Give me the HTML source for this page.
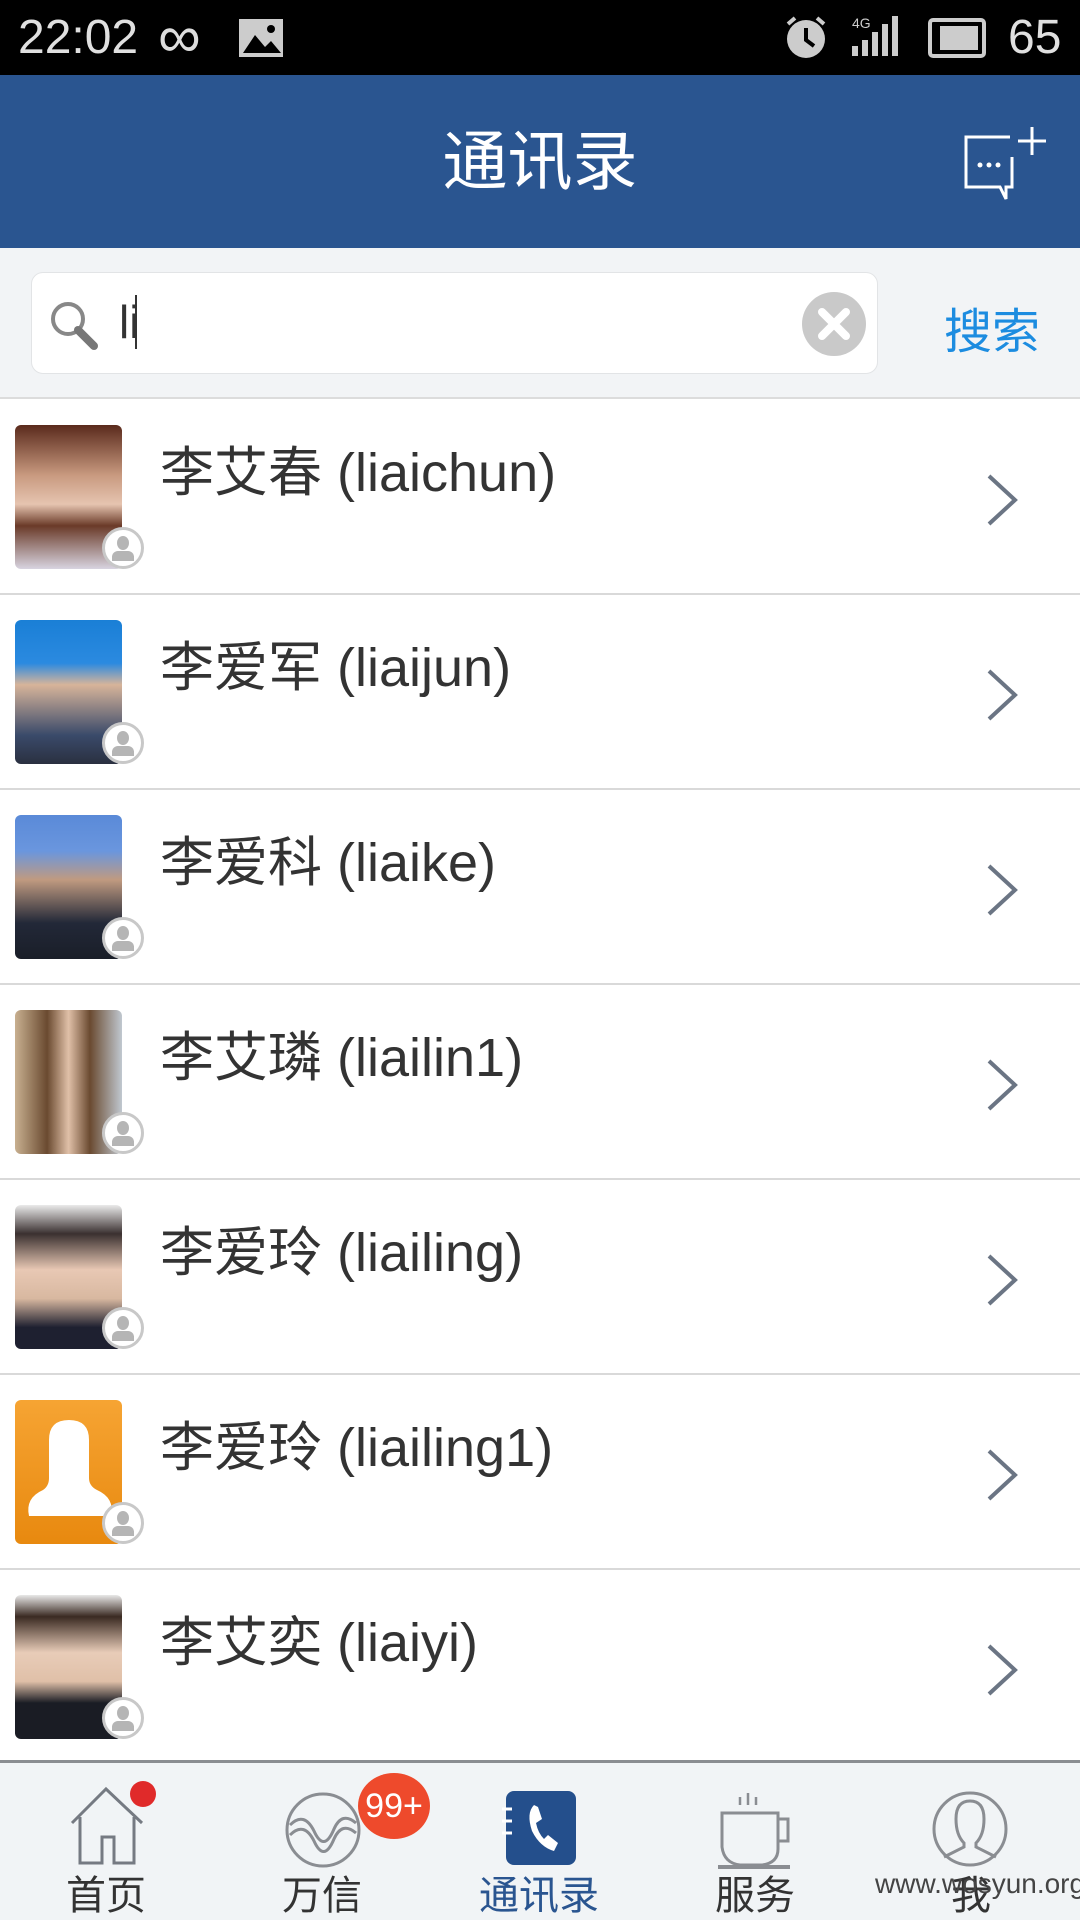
<!DOCTYPE html>
<html><head><meta charset="utf-8"><style>
*{margin:0;padding:0;box-sizing:border-box}
body{width:1080px;height:1920px;overflow:hidden;background:#fff;font-family:"Liberation Sans","Noto Sans CJK SC",sans-serif;position:relative}
.status{position:absolute;left:0;top:0;width:1080px;height:75px;background:#000;color:#ddd;font-size:48px}
.header{position:absolute;left:0;top:75px;width:1080px;height:173px;background:#2a5590;color:#fff;text-align:center;font-size:65px;line-height:173px}
.sarea{position:absolute;left:0;top:248px;width:1080px;height:151px;background:#f2f4f6;border-bottom:2px solid #dcdcdc}
.sbox{position:absolute;left:31px;top:24px;width:847px;height:102px;background:#fff;border:1px solid #e2e4e6;border-radius:12px}
.row{position:absolute;left:0;width:1080px;height:195px;border-bottom:2px solid #d9d9d9}
.av{position:absolute;left:15px;top:25px;width:107px;height:144px;border-radius:6px;overflow:hidden}
.badge{position:absolute;left:102px;top:127px;width:42px;height:42px;border-radius:50%;background:#fff;border:3px solid #c8c8c8;overflow:hidden}
.badge::before{content:"";position:absolute;left:12px;top:6px;width:12px;height:14px;border-radius:50%;background:#b5b5b5}
.badge::after{content:"";position:absolute;left:7px;top:21px;width:22px;height:10px;border-radius:6px 6px 0 0;background:#b5b5b5}
.name{position:absolute;left:160px;top:28px;font-size:54px;color:#333;white-space:nowrap}
.chev{position:absolute;left:985px;top:72px}
.tab{position:absolute;left:0;top:1760px;width:1080px;height:160px;background:#f1f4f6;border-top:3px solid #8a8d91}
.tl{position:absolute;top:100px;font-size:40px;color:#333;width:200px;text-align:center}
</style></head><body>
<div class="status">
<span style="position:absolute;left:18px;top:10px;font-size:48px;color:#e0e0e0">22:02</span>
<span style="position:absolute;left:158px;top:2px;font-size:60px">∞</span>
<svg style="position:absolute;left:237px;top:17px" width="48" height="42"><rect x="2" y="2" width="44" height="38" fill="#ccc"/><path d="M6 36 L18 18 L28 30 L34 24 L44 36Z" fill="#000"/><circle cx="34" cy="12" r="4" fill="#000"/></svg>
<svg style="position:absolute;left:783px;top:14px" width="46" height="46"><circle cx="23" cy="25" r="19" fill="#ccc"/><path d="M23 14 V26 L31 32" stroke="#000" stroke-width="4" fill="none"/><path d="M5 10 L12 4 M41 10 L34 4" stroke="#ccc" stroke-width="4"/></svg>
<svg style="position:absolute;left:850px;top:14px" width="56" height="44"><text x="2" y="14" font-size="14" fill="#ccc" font-family="Liberation Sans">4G</text><rect x="2" y="32" width="6" height="10" fill="#ccc"/><rect x="12" y="26" width="6" height="16" fill="#ccc"/><rect x="22" y="18" width="6" height="24" fill="#ccc"/><rect x="32" y="10" width="6" height="32" fill="#ccc"/><rect x="42" y="2" width="6" height="40" fill="#ccc"/></svg>
<svg style="position:absolute;left:926px;top:18px" width="62" height="40"><rect x="4" y="2" width="54" height="36" rx="3" fill="none" stroke="#ccc" stroke-width="4"/><rect x="14" y="8" width="38" height="24" fill="#ccc"/></svg>
<span style="position:absolute;left:1008px;top:10px;font-size:48px;color:#e0e0e0">65</span>
</div>
<div class="header">通讯录
<svg style="position:absolute;left:960px;top:50px" width="90" height="80"><path d="M50 12 H6 V62 H40 L46 74 V62 H52 V32" fill="none" stroke="#fff" stroke-width="3"/><path d="M72 2 V30 M58 16 H86" stroke="#fff" stroke-width="3"/><circle cx="20" cy="40" r="2.5" fill="#fff"/><circle cx="29" cy="40" r="2.5" fill="#fff"/><circle cx="38" cy="40" r="2.5" fill="#fff"/></svg>
</div>
<div class="sarea">
<div class="sbox">
<svg style="position:absolute;left:14px;top:24px" width="56" height="56"><circle cx="22" cy="22" r="15" fill="none" stroke="#888" stroke-width="4"/><path d="M32 33 L48 49" stroke="#777" stroke-width="8" stroke-linecap="round"/></svg>
<span style="position:absolute;left:87px;top:22px;font-size:46px;color:#333">li</span>
<div style="position:absolute;left:103px;top:22px;width:2px;height:54px;background:#333"></div>
<svg style="position:absolute;left:768px;top:17px" width="68" height="68"><circle cx="34" cy="34" r="32" fill="#c9c9c9"/><path d="M22 22 L46 46 M46 22 L22 46" stroke="#fff" stroke-width="8" stroke-linecap="round"/></svg>
</div>
<span style="position:absolute;left:944px;top:44px;font-size:48px;color:#1c8ce0">搜索</span>
</div>

<div class="row" style="top:400px"><div class="av" style="background:linear-gradient(#5a2a1c 0%,#c99a80 35%,#e6c4b0 55%,#6a3a28 70%,#d8d4e0 100%)"></div><div class="badge"></div><div class="name">李艾春 (liaichun)</div><svg class="chev" width="36" height="56"><path d="M4 4 L30 28 L4 52" fill="none" stroke="#6b7584" stroke-width="4"/></svg></div>
<div class="row" style="top:595px"><div class="av" style="background:linear-gradient(#1a7fd6 0%,#2b8ae0 30%,#d7b49a 45%,#3a4a6a 80%,#2a3040 100%)"></div><div class="badge"></div><div class="name">李爱军 (liaijun)</div><svg class="chev" width="36" height="56"><path d="M4 4 L30 28 L4 52" fill="none" stroke="#6b7584" stroke-width="4"/></svg></div>
<div class="row" style="top:790px"><div class="av" style="background:linear-gradient(#5a8ad8 0%,#6a96de 25%,#c09a80 45%,#222838 75%,#1a1e28 100%)"></div><div class="badge"></div><div class="name">李爱科 (liaike)</div><svg class="chev" width="36" height="56"><path d="M4 4 L30 28 L4 52" fill="none" stroke="#6b7584" stroke-width="4"/></svg></div>
<div class="row" style="top:985px"><div class="av" style="background:linear-gradient(90deg,#c8b090 0%,#6a4a30 30%,#e0c0a8 50%,#6a4a30 70%,#c0c8d0 100%)"></div><div class="badge"></div><div class="name">李艾璘 (liailin1)</div><svg class="chev" width="36" height="56"><path d="M4 4 L30 28 L4 52" fill="none" stroke="#6b7584" stroke-width="4"/></svg></div>
<div class="row" style="top:1180px"><div class="av" style="background:linear-gradient(#eaeaea 0%,#3a3030 20%,#e8c8b4 45%,#d8b8a0 65%,#1e2030 85%,#1e2030 100%)"></div><div class="badge"></div><div class="name">李爱玲 (liailing)</div><svg class="chev" width="36" height="56"><path d="M4 4 L30 28 L4 52" fill="none" stroke="#6b7584" stroke-width="4"/></svg></div>
<div class="row" style="top:1375px"><div class="av" style="background:linear-gradient(#f6a433,#e8890f)"><svg width="107" height="144"><path d="M34 40 Q34 20 54 20 Q74 20 74 40 V78 Q74 86 82 90 Q100 98 96 116 H14 Q10 98 28 90 Q34 86 34 78Z" fill="#fff"/></svg></div><div class="badge"></div><div class="name">李爱玲 (liailing1)</div><svg class="chev" width="36" height="56"><path d="M4 4 L30 28 L4 52" fill="none" stroke="#6b7584" stroke-width="4"/></svg></div>
<div class="row" style="top:1570px"><div class="av" style="background:linear-gradient(#e8e8e8 0%,#3a2a22 15%,#e8ccb8 40%,#e0c0a8 60%,#1a1c24 75%,#1a1c24 100%)"></div><div class="badge"></div><div class="name">李艾奕 (liaiyi)</div><svg class="chev" width="36" height="56"><path d="M4 4 L30 28 L4 52" fill="none" stroke="#6b7584" stroke-width="4"/></svg></div>

<div class="tab">
<svg style="position:absolute;left:68px;top:22px" width="80" height="80"><path d="M4 38 L38 4 L74 38 M12 32 V78 H34 V52 H46 V78 H66 V32" fill="none" stroke="#757a82" stroke-width="3"/></svg>
<div style="position:absolute;left:130px;top:18px;width:26px;height:26px;border-radius:50%;background:#e02a2a"></div>
<svg style="position:absolute;left:284px;top:28px" width="78" height="78"><circle cx="39" cy="39" r="36" fill="none" stroke="#8a8d92" stroke-width="3"/><path d="M6 34 Q20 20 30 40 Q40 62 50 38 Q58 20 72 32" fill="none" stroke="#8a8d92" stroke-width="3"/><path d="M6 44 Q20 30 30 50 Q40 72 50 48 Q58 30 72 42" fill="none" stroke="#8a8d92" stroke-width="3"/></svg>
<div style="position:absolute;left:358px;top:10px;width:72px;height:66px;border-radius:50%;background:#ee4a2c;color:#fff;font-size:34px;line-height:66px;text-align:center">99+</div>
<svg style="position:absolute;left:500px;top:26px" width="78" height="78"><rect x="6" y="2" width="70" height="74" rx="8" fill="#244f8c"/><path d="M2 20 H12 M2 32 H12 M2 44 H12" stroke="#fff" stroke-width="3"/><path d="M34 16 Q26 24 32 42 Q40 58 54 62 L58 54 L48 46 L44 50 Q38 44 36 34 L42 30 L38 18Z" fill="#fff"/></svg>
<svg style="position:absolute;left:716px;top:24px" width="80" height="82"><path d="M24 10 V18 M32 6 V18 M40 10 V18" stroke="#8a8d92" stroke-width="2.5"/><path d="M6 26 H62 V62 Q62 76 46 78 H24 Q8 76 6 60Z M62 32 H72 V54 H62" fill="none" stroke="#8a8d92" stroke-width="3"/><path d="M2 80 H74" stroke="#8a8d92" stroke-width="4"/></svg>
<svg style="position:absolute;left:930px;top:26px" width="80" height="80"><circle cx="40" cy="40" r="36" fill="none" stroke="#8a8d92" stroke-width="3"/><path d="M40 12 Q26 12 26 30 Q26 46 34 54 L34 58 L14 68 M40 12 Q54 12 54 30 Q54 46 46 54 L46 58 L66 68" fill="none" stroke="#8a8d92" stroke-width="3"/></svg>
<div class="tl" style="left:6px">首页</div>
<div class="tl" style="left:222px">万信</div>
<div class="tl" style="left:439px;color:#2a5590">通讯录</div>
<div class="tl" style="left:655px">服务</div>
<div class="tl" style="left:871px">我</div>
<span style="position:absolute;left:875px;top:105px;font-size:28px;color:#444">www.wosyun.org</span>
</div>
</body></html>
